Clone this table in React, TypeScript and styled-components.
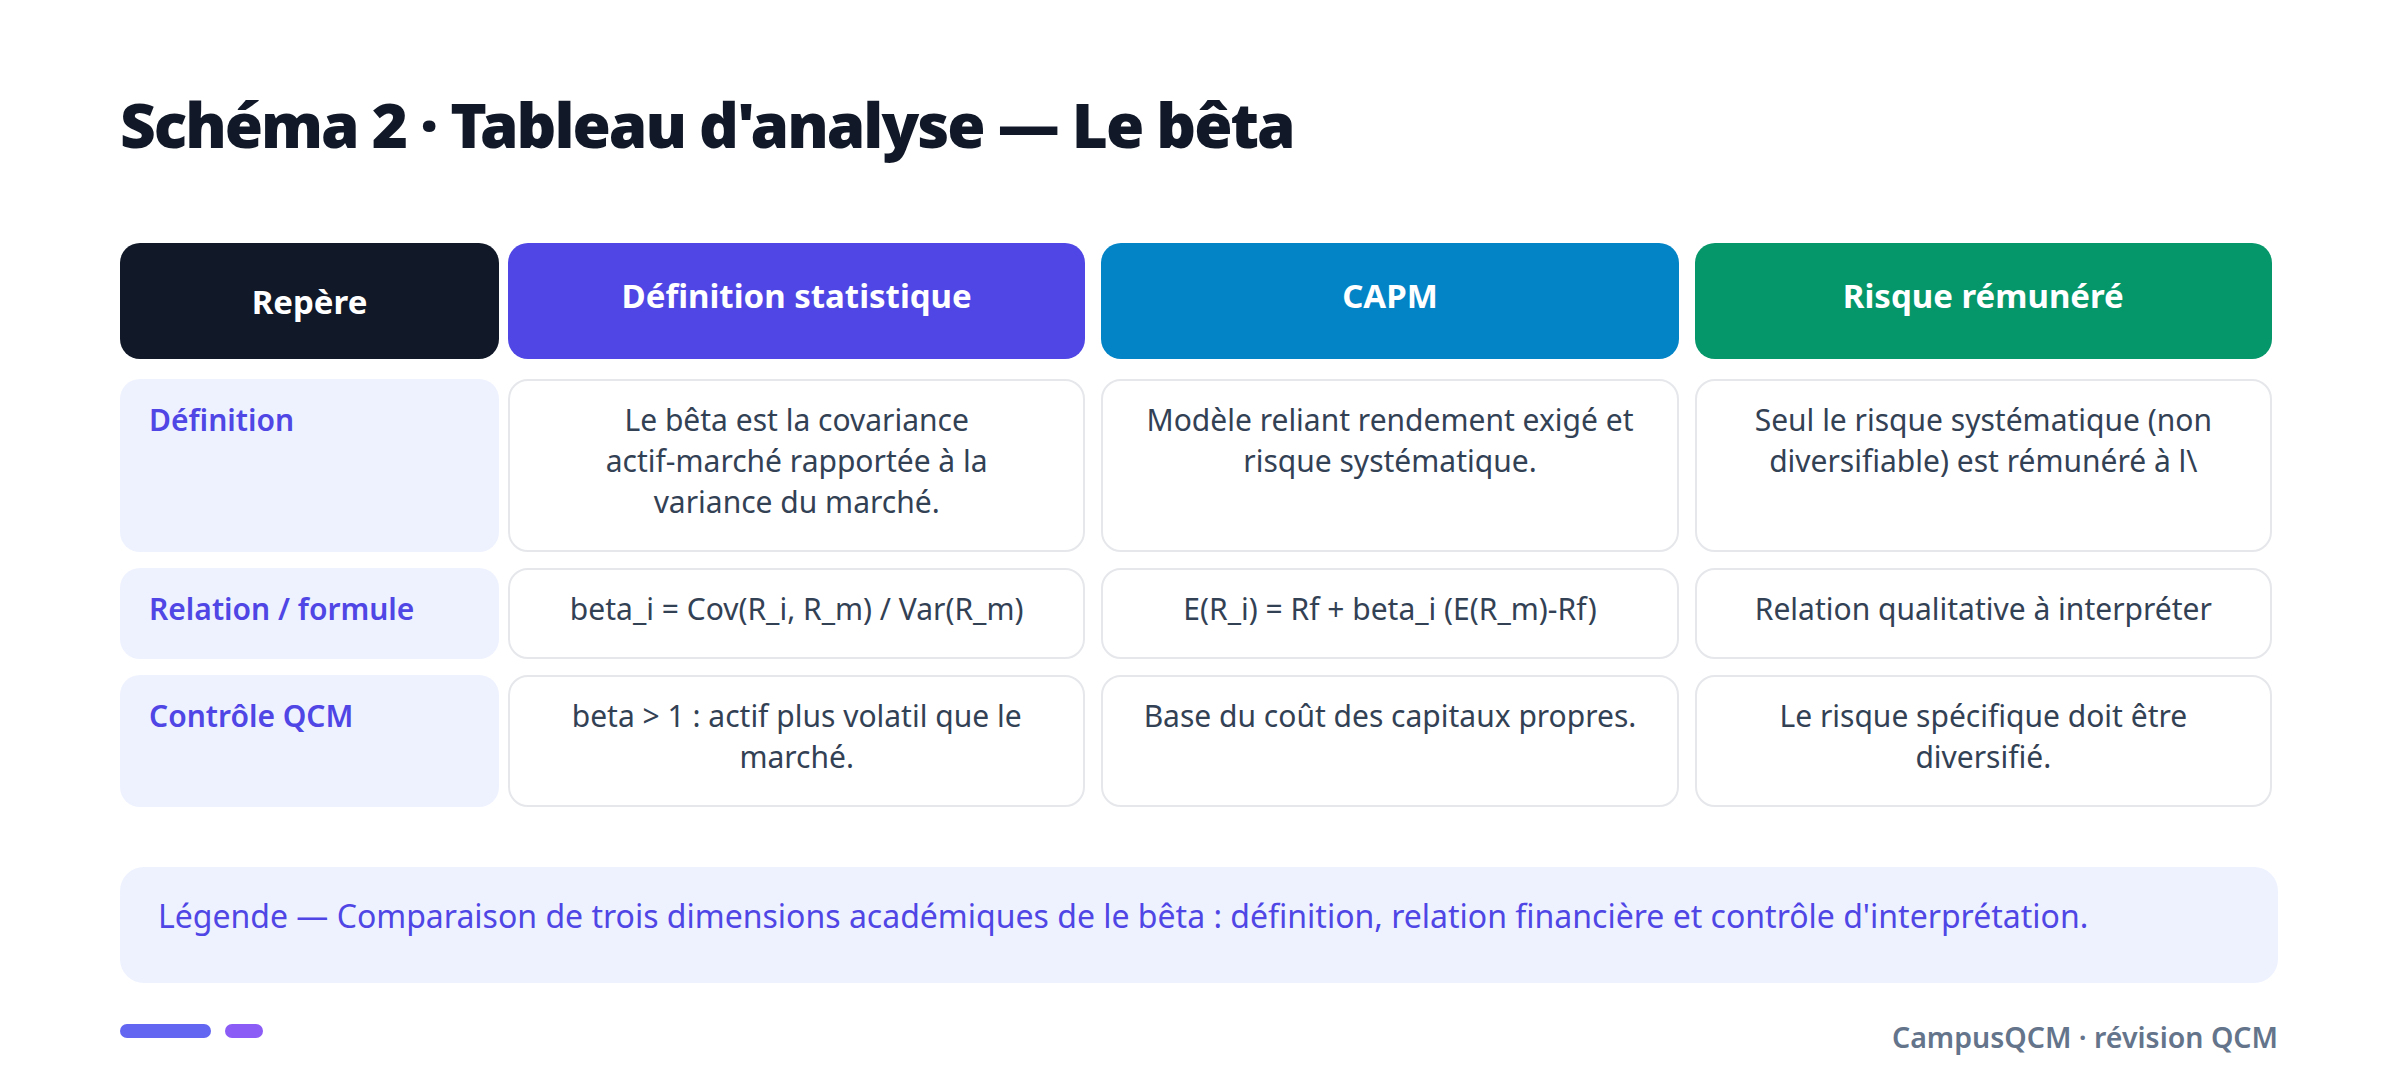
import styled, { createGlobalStyle } from "styled-components";

const GlobalStyle = createGlobalStyle`
    html, body {
        margin: 0;
        padding: 0;
        background: #ffffff;
    }
    body {
        font-family: "Noto Sans", "Open Sans", sans-serif;
        color: #1e293b;
    }
`;

const Page = styled.div`
    width: 2400px;
    box-sizing: border-box;
    padding: 87px 122px 0 120px;
`;

const Title = styled.h1`
    margin: 0 0 82px 0;
    font-size: 62px;
    line-height: 1.2;
    font-weight: 900;
    letter-spacing: -2px;
    color: #111827;
`;

const Table = styled.div`
    display: grid;
    grid-template-columns: 372px repeat(3, 1fr);
    column-gap: 16px;
    row-gap: 16px;
    width: 2152px;
`;

const Head = styled.div<{ $bg: string; $first?: boolean }>`
    height: 116px;
    margin-bottom: 4px;
    margin-right: ${(p) => (p.$first ? "-7px" : "0")};
    box-sizing: border-box;
    padding-bottom: ${(p) => (p.$first ? "0" : "12px")};
    border-radius: 20px;
    background: ${(p) => p.$bg};
    color: #ffffff;
    font-size: 33px;
    font-weight: 700;
    display: flex;
    align-items: center;
    justify-content: center;
`;

const Label = styled.div`
    margin-right: -7px;
    padding: 20px 28px 30px 29px;
    border-radius: 20px;
    background: #eef2ff;
    color: #4f46e5;
    font-size: 30px;
    line-height: 41px;
    font-weight: 600;
`;

const Cell = styled.div`
    padding: 18px 38px 28px;
    border: 2px solid #e5e7eb;
    border-radius: 20px;
    background: #ffffff;
    color: #334155;
    font-size: 30px;
    line-height: 41px;
    text-align: center;
`;

const Legend = styled.div`
    margin-top: 60px;
    width: 2158px;
    box-sizing: border-box;
    padding: 26px 38px 45px;
    border-radius: 24px;
    background: #eef2ff;
    color: #4f46e5;
    font-size: 32px;
    line-height: 45px;
`;

const Footer = styled.div`
    width: 2158px;
    margin-top: 34px;
    display: flex;
    align-items: flex-start;
    justify-content: space-between;
`;

const Bars = styled.div`
    display: flex;
    gap: 14px;
    padding-top: 7px;
`;

const Bar = styled.span<{ $w: number; $c: string }>`
    display: block;
    width: ${(p) => p.$w}px;
    height: 14px;
    border-radius: 7px;
    background: ${(p) => p.$c};
`;

const Brand = styled.div`
    font-size: 28.5px;
    line-height: 40px;
    font-weight: 600;
    color: #64748b;
`;

const heads = [
    { label: "Définition statistique", bg: "#4f46e5" },
    { label: "CAPM", bg: "#0284c7" },
    { label: "Risque rémunéré", bg: "#059669" },
];

// actif‑marché uses a non-breaking hyphen so the line breaks like the original
const rows = [
    {
        label: "Définition",
        cells: [
            "Le bêta est la covariance actif\u2011marché rapportée à la variance du marché.",
            "Modèle reliant rendement exigé et risque systématique.",
            "Seul le risque systématique (non diversifiable) est rémunéré à l\\",
        ],
    },
    {
        label: "Relation / formule",
        cells: [
            "beta_i = Cov(R_i, R_m) / Var(R_m)",
            "E(R_i) = Rf + beta_i (E(R_m)-Rf)",
            "Relation qualitative à interpréter",
        ],
    },
    {
        label: "Contrôle QCM",
        cells: [
            "beta > 1 : actif plus volatil que le marché.",
            "Base du coût des capitaux propres.",
            "Le risque spécifique doit être diversifié.",
        ],
    },
];

export default function App() {
    return (
        <Page>
            <GlobalStyle />
            <Title>Schéma 2 · Tableau d'analyse — Le bêta</Title>
            <Table>
                <Head $bg="#111827" $first>
                    Repère
                </Head>
                {heads.map((h) => (
                    <Head key={h.label} $bg={h.bg}>
                        {h.label}
                    </Head>
                ))}
                {rows.map((r) => [
                    <Label key={r.label}>{r.label}</Label>,
                    ...r.cells.map((c, i) => <Cell key={r.label + i}>{c}</Cell>),
                ])}
            </Table>
            <Legend>
                Légende — Comparaison de trois dimensions académiques de le bêta : définition,
                relation financière et contrôle d'interprétation.
            </Legend>
            <Footer>
                <Bars>
                    <Bar $w={91} $c="#6366f1" />
                    <Bar $w={38} $c="#8b5cf6" />
                </Bars>
                <Brand>CampusQCM · révision QCM</Brand>
            </Footer>
        </Page>
    );
}
